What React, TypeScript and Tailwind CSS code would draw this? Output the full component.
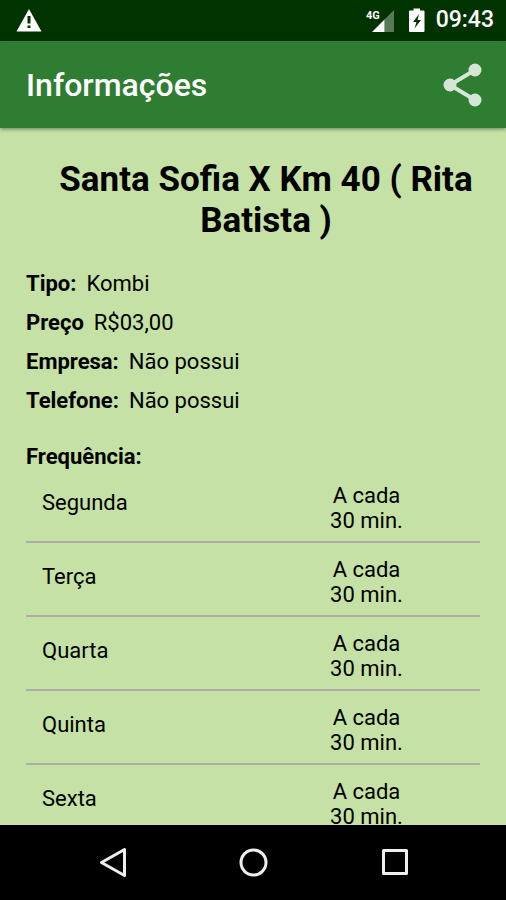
const details = [
  { label: "Tipo:", value: "Kombi" },
  { label: "Preço", value: "R$03,00" },
  { label: "Empresa:", value: "Não possui" },
  { label: "Telefone:", value: "Não possui" },
];

const schedule = [
  { day: "Segunda", every: "30 min." },
  { day: "Terça", every: "30 min." },
  { day: "Quarta", every: "30 min." },
  { day: "Quinta", every: "30 min." },
  { day: "Sexta", every: "30 min." },
];

function StatusBar() {
  return (
    <div className="flex h-[41px] shrink-0 items-center bg-[#003300] pr-3 pl-4 text-white">
      <svg width="26" height="24" viewBox="0 0 26 24" aria-hidden="true">
        <path fill="currentColor" fillRule="evenodd" d="M13 0 25.500 22.500H0.500ZM11.500 7V14.500H14.500V7ZM11.500 16.500V19H14.500V16.500Z" />
      </svg>
      <div className="ml-auto flex items-center">
        <svg className="mr-3" width="30" height="26" viewBox="0 0 30 26" aria-hidden="true">
          <text x="0" y="11" fill="currentColor" fontSize="11" fontWeight="700" fontFamily="Roboto, sans-serif">4G</text>
          <path fill="#fff" fillOpacity=".35" d="M28 2V24H18.500V11.500Z" />
          <path fill="currentColor" d="M18.500 11.500V24H6Z" />
        </svg>
        <svg className="mr-2.5" width="18" height="26" viewBox="0 0 18 26" aria-hidden="true">
          <path fill="currentColor" fillRule="evenodd" d="M5.500 0.500H12V2.500H15.500Q16.500 2.500 16.500 3.500V23Q16.500 24 15.500 24H2Q1 24 1 23V3.500Q1 2.500 2 2.500H5.500ZM11 6 5 14H8.500L6.500 20.500 13 12H9.500Z" />
        </svg>
        <span className="text-[23px] font-medium">09:43</span>
      </div>
    </div>
  );
}

function AppBar() {
  return (
    <header className="z-10 flex h-[87px] shrink-0 items-center justify-between bg-[#2e7d32] pr-[22px] pl-[26px] shadow-[0_1px_4px_rgba(0,0,0,0.45)]">
      <h1 className="text-[32px] font-medium text-white">Informações</h1>
      <button type="button" aria-label="Compartilhar" className="text-[#d5e5d6]">
        <svg className="block" width="42" height="44" viewBox="0 0 42 44" fill="currentColor" aria-hidden="true">
          <path d="M33 7 8 22 33 37" fill="none" stroke="currentColor" strokeWidth="4" />
          <circle cx="33" cy="7" r="6.500" />
          <circle cx="8" cy="22" r="6.500" />
          <circle cx="33" cy="37" r="6.500" />
        </svg>
      </button>
    </header>
  );
}

function NavigationBar() {
  return (
    <nav className="flex h-[75px] shrink-0 items-center justify-center gap-[111px] bg-black text-[#eee]">
      <button type="button" aria-label="Voltar">
        <svg className="block" width="30" height="32" viewBox="0 0 30 32" fill="none" stroke="currentColor" strokeWidth="3" strokeLinejoin="round" aria-hidden="true">
          <path d="M27.500 2.500V28.500L4.500 15.500Z" />
        </svg>
      </button>
      <button type="button" aria-label="Início">
        <svg className="block" width="30" height="32" viewBox="0 0 30 32" fill="none" stroke="currentColor" strokeWidth="3" aria-hidden="true">
          <circle cx="15.500" cy="15.500" r="12.500" />
        </svg>
      </button>
      <button type="button" aria-label="Recentes">
        <svg className="block" width="30" height="32" viewBox="0 0 30 32" fill="none" stroke="currentColor" strokeWidth="3" strokeLinejoin="round" aria-hidden="true">
          <rect x="4.500" y="3.500" width="23" height="23" />
        </svg>
      </button>
    </nav>
  );
}

export default function App() {
  return (
    <div className="flex h-screen flex-col bg-[#c5e1a5] font-[Roboto,'Noto_Sans',sans-serif] text-black">
      <StatusBar />
      <AppBar />
      <main className="min-h-0 flex-1 overflow-y-auto px-[26px] pt-[31px] [scrollbar-width:none]">
        <h2 className="pl-[26px] text-center text-[35px] leading-[41px] font-bold">
          Santa Sofia X Km 40 ( Rita Batista )
        </h2>
        <dl className="mt-[30px] flex flex-col gap-3.5 text-[22px] leading-[25px]">
          {details.map(({ label, value }) => (
            <div key={label} className="flex gap-2.5">
              <dt className="font-bold">{label}</dt>
              <dd>{value}</dd>
            </div>
          ))}
        </dl>
        <h3 className="mt-[31px] text-[22px] leading-[25px] font-bold">Frequência:</h3>
        <table className="w-full table-fixed text-[22px] leading-[25px]">
          <tbody>
            {schedule.map(({ day, every }) => (
              <tr key={day} className="border-b-2 border-[#adadad] align-top">
                <th scope="row" className="pt-[21px] pl-4 text-left font-normal">{day}</th>
                <td className="pt-3.5 pb-2 text-center">
                  A cada
                  <br />
                  {every}
                </td>
              </tr>
            ))}
          </tbody>
        </table>
      </main>
      <NavigationBar />
    </div>
  );
}
